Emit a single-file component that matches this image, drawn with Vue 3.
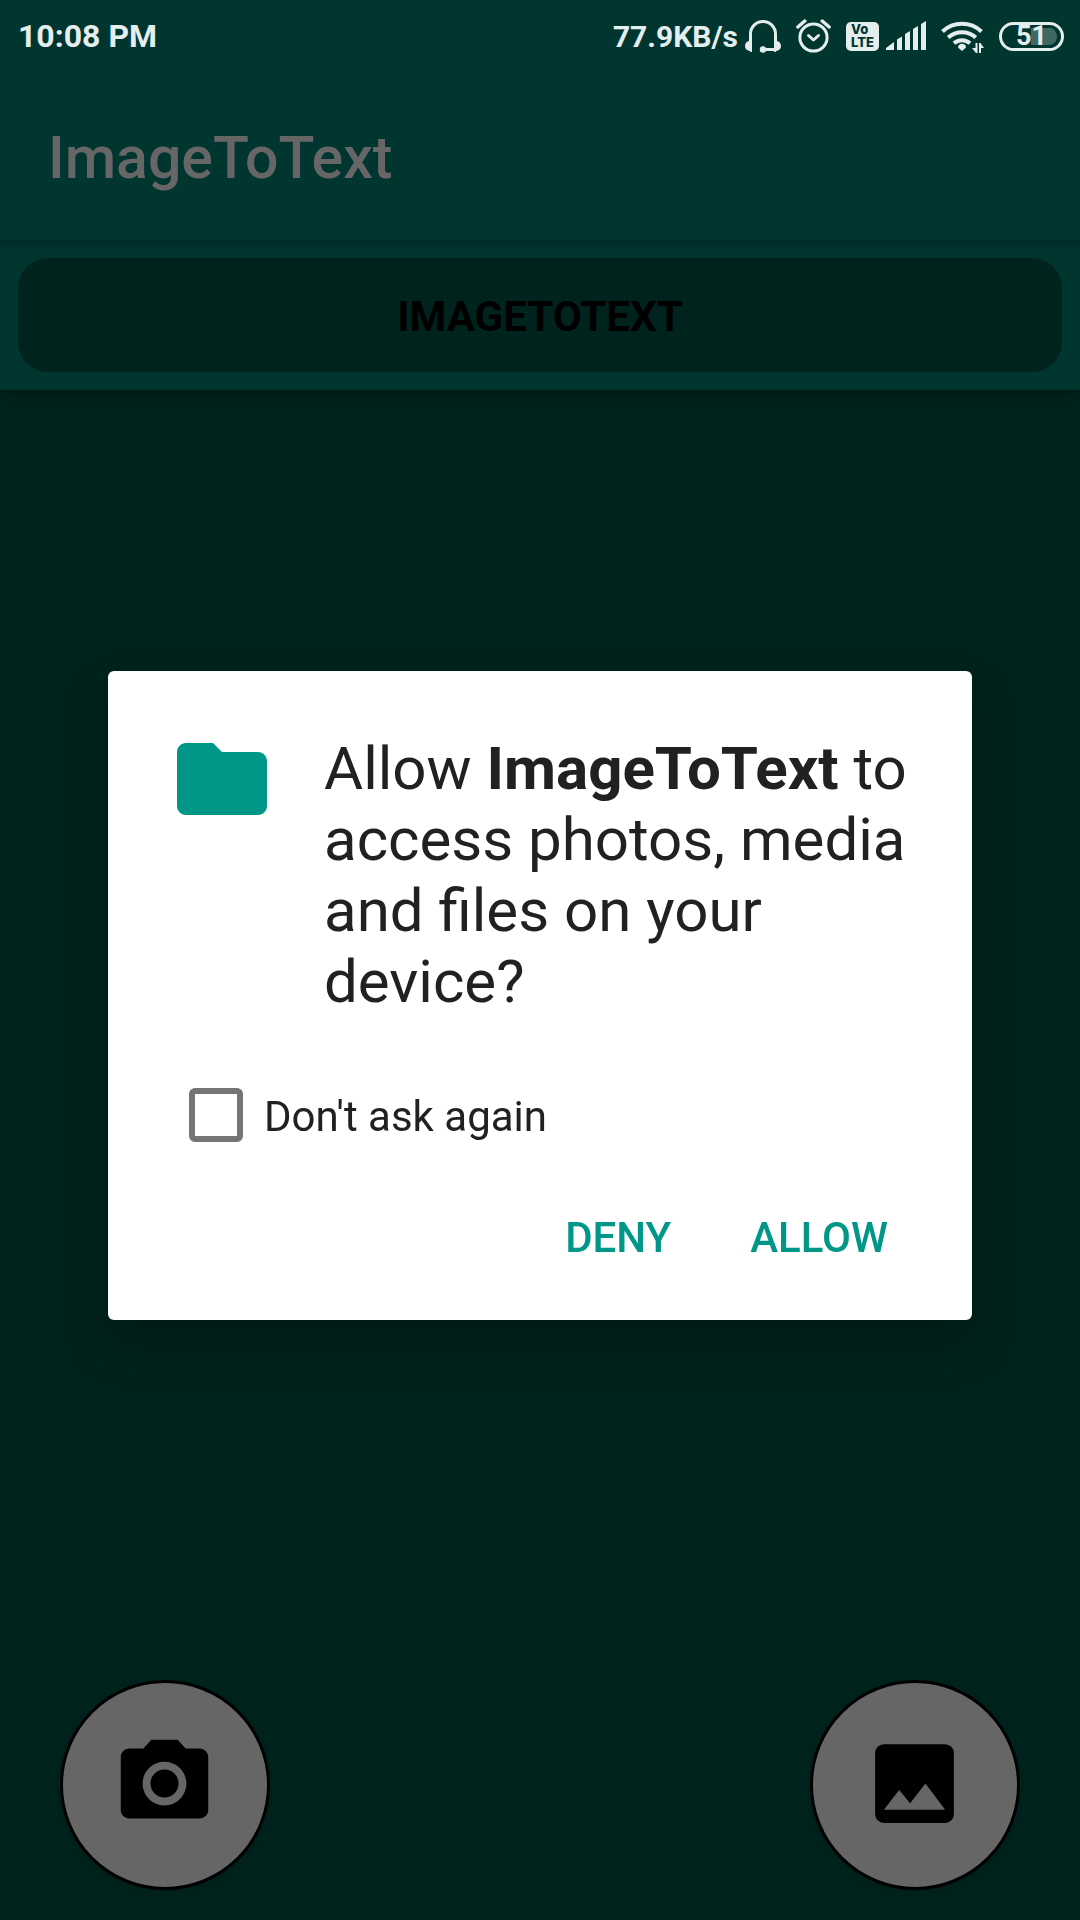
<script setup>
import { ref } from 'vue'

const dontAsk = ref(false)
const dialogOpen = ref(true)
const speed = '77.9KB/s'
const time = '10:08 PM'
const battery = 51
</script>

<template>
  <div class="screen">
    <header class="status">
      <span class="time">{{ time }}</span>
      <div class="indicators">
        <div class="pair">
          <span class="speed">{{ speed }}</span>
          <svg width="36" height="34" viewBox="0 0 36 34" aria-hidden="true">
            <path d="M5.500 23V15a12.500 12.500 0 0 1 25 0v15.500H19" fill="none" stroke="currentColor" stroke-width="3" />
            <path d="M7 21v12H5.500l-.5-1C2 31.500 0 30 0 27s2-4.500 4-5zM29 21v12h1.500l.5-1c3-.5 5-2 5-5s-2-4.500-4-5z" fill="currentColor" />
            <circle cx="18" cy="30.500" r="3.200" fill="currentColor" />
          </svg>
        </div>
        <svg width="35" height="34" viewBox="0 0 35 34" fill="none" stroke="currentColor" aria-hidden="true">
          <circle cx="17.500" cy="18.500" r="13.600" stroke-width="3" />
          <path d="M12.500 16.500l5 4.500 5-4.500" stroke-width="3" stroke-linecap="round" stroke-linejoin="round" />
          <path d="M1.800 8l7-6M33.200 8l-7-6" stroke-width="3.400" stroke-linecap="round" />
        </svg>
        <div class="pair">
          <svg class="volte" width="33" height="30" viewBox="0 0 33 30">
            <rect width="33" height="29" y="1" rx="5" fill="currentColor" />
            <text x="5" y="13">Vo</text>
            <text x="5" y="26">LTE</text>
          </svg>
          <svg width="40" height="30" viewBox="0 0 40 30" fill="currentColor" aria-hidden="true">
            <path d="M0 29v-2l8-6v8zM11 29V18.500l5-3V29zM19 29V13l5-3v19zM27 29V8l5-3v24zM35 29V3l5-3v29z" />
          </svg>
        </div>
        <svg width="43" height="34" viewBox="0 0 43 34" aria-hidden="true">
          <g fill="none" stroke="currentColor" stroke-width="4">
            <path d="M1.500 12.500a28.500 28.500 0 0 1 39 0" />
            <path d="M7.200 18.500a20.500 20.500 0 0 1 27.600 0" />
            <path d="M13 24.300a12 12 0 0 1 16 0" />
          </g>
          <path d="M21 32l-4-3.500c0-5 8-5 8 0z" fill="currentColor" />
          <path d="M36.500 24v10h-1.500l-4-5h3.500v-5zM38 34V24h1.500l3.500 5h-3v5z" fill="currentColor" />
        </svg>
        <div class="battery"><span>{{ battery }}</span></div>
      </div>
    </header>

    <div class="appbar"><h1>ImageToText</h1></div>

    <nav class="tabs">
      <button type="button" class="tab">IMAGETOTEXT</button>
    </nav>

    <main class="content">
      <button type="button" class="fab" aria-label="Take a photo">
        <svg width="105" height="105" viewBox="0 0 24 24" aria-hidden="true">
          <circle cx="12" cy="12" r="3.200" />
          <path d="M9 2L7.170 4H4c-1.100 0-2 .9-2 2v12c0 1.100.9 2 2 2h16c1.100 0 2-.9 2-2V6c0-1.100-.9-2-2-2h-3.170L15 2H9zm3 15c-2.760 0-5-2.240-5-5s2.240-5 5-5 5 2.240 5 5-2.240 5-5 5z" />
        </svg>
      </button>
      <button type="button" class="fab" aria-label="Choose a picture">
        <svg width="105" height="105" viewBox="0 0 24 24" aria-hidden="true">
          <path fill-rule="evenodd" d="M5 3h14a2 2 0 0 1 2 2v14a2 2 0 0 1-2 2H5a2 2 0 0 1-2-2V5a2 2 0 0 1 2-2zM5 18h14l-4.500-6-3.500 4.500-2.500-3z" />
        </svg>
      </button>
    </main>

    <div v-if="dialogOpen" class="overlay">
      <section class="dialog" role="dialog" aria-modal="true" aria-labelledby="ask">
        <div class="message">
          <svg width="108" height="108" viewBox="0 0 24 24" aria-hidden="true">
            <path fill="#009688" d="M10 4H4c-1.100 0-2 .9-2 2v12c0 1.100.9 2 2 2h16c1.100 0 2-.9 2-2V8c0-1.100-.9-2-2-2h-8l-2-2z" />
          </svg>
          <p id="ask">Allow <b>ImageToText</b> to access photos, media and files on your device?</p>
        </div>
        <label class="check">
          <input v-model="dontAsk" type="checkbox" />
          <span>Don't ask again</span>
        </label>
        <div class="actions">
          <button type="button" @click="dialogOpen = false">DENY</button>
          <button type="button" @click="dialogOpen = false">ALLOW</button>
        </div>
      </section>
    </div>
  </div>
</template>

<style>
body {
  background: #00231d;
}
</style>

<style scoped>
.screen {
  display: flex;
  flex-direction: column;
  min-height: 100vh;
  background: #00231d;
  font-family: Roboto, "Liberation Sans", sans-serif;
}

svg {
  display: block;
  flex: none;
}

button {
  margin: 0;
  border: 0;
  font-family: inherit;
  cursor: pointer;
}

.status {
  display: flex;
  align-items: center;
  justify-content: space-between;
  height: 72px;
  padding: 0 16px 0 18px;
  background: #003530;
  color: #e4eeed;
}

.time {
  font-size: 32px;
  font-weight: 700;
}

.indicators {
  display: flex;
  align-items: center;
  gap: 15px;
}

.pair {
  display: flex;
  align-items: center;
  gap: 7px;
}

.speed {
  font-size: 30px;
  font-weight: 700;
}

.volte text {
  fill: #003530;
  font-family: Inter, Roboto, sans-serif;
  font-size: 13px;
  font-weight: 800;
}

.battery {
  display: flex;
  align-items: center;
  justify-content: center;
  box-sizing: border-box;
  width: 65px;
  height: 29px;
  padding: 3px 4px;
  border: 3px solid currentColor;
  border-radius: 15px;
  background: linear-gradient(90deg, #003530 50%, #3e6864 50%) content-box;
  font-size: 27px;
  font-weight: 700;
  line-height: 17px;
}

.appbar {
  position: relative;
  z-index: 2;
  display: flex;
  align-items: center;
  box-sizing: border-box;
  height: 168px;
  padding: 3px 48px 0;
  background: #003530;
  box-shadow: 0 4px 12px rgba(0, 0, 0, 0.25);
}

h1 {
  margin: 0;
  color: #666;
  font-size: 59px;
  font-weight: 500;
}

.tabs {
  position: relative;
  z-index: 1;
  display: flex;
  padding: 18px;
  background: #003530;
  box-shadow: 0 4px 12px rgba(0, 0, 0, 0.25);
}

.tab {
  flex: 1;
  height: 114px;
  padding: 2px 0 0;
  border-radius: 30px;
  background: #00231d;
  color: #000;
  font-size: 42px;
  font-weight: 700;
}

.content {
  display: flex;
  flex: 1;
  align-items: flex-end;
  justify-content: space-between;
  padding: 30px 60px;
}

.fab {
  display: flex;
  align-items: center;
  justify-content: center;
  box-sizing: border-box;
  width: 210px;
  height: 210px;
  padding: 0 2px 3px 0;
  border: 3px solid #000;
  border-radius: 50%;
  background: #666;
  box-shadow: 0 3px 8px rgba(0, 0, 0, 0.15);
}

.overlay {
  position: fixed;
  inset: 71px 0 0;
  z-index: 3;
  display: flex;
  align-items: center;
  justify-content: center;
}

.dialog {
  box-sizing: border-box;
  width: 80%;
  padding: 54px 60px 29px;
  border-radius: 6px;
  background: #fff;
  box-shadow: 0 24px 48px rgba(0, 0, 0, 0.25);
  color: #212121;
}

.message {
  display: flex;
  align-items: flex-start;
  gap: 48px;
}

.message p {
  margin: 8px 0 0;
  font-size: 60px;
  line-height: 71px;
}

.check {
  display: flex;
  align-items: center;
  gap: 21px;
  height: 54px;
  margin: 71px 0 41px 21px;
  font-size: 42px;
  line-height: 54px;
}

.check span {
  padding-top: 3px;
}

.check input {
  appearance: none;
  box-sizing: border-box;
  width: 54px;
  height: 54px;
  margin: 0;
  border: 6px solid #757575;
  border-radius: 6px;
}

.check input:checked {
  border-color: #009688;
  background: #009688;
}

.actions {
  display: flex;
  justify-content: flex-end;
  gap: 31px;
}

.actions button {
  height: 108px;
  padding: 0 24px;
  background: none;
  color: #009688;
  font-size: 42px;
  font-weight: 500;
}
</style>
